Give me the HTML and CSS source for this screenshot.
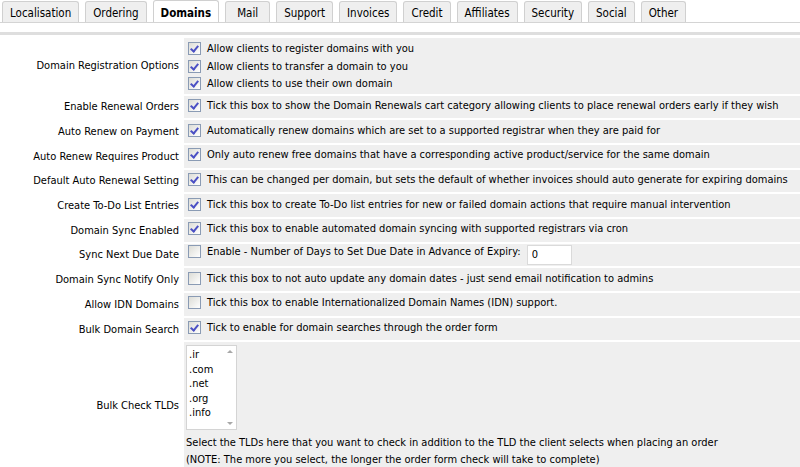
FILE: index.html
```html
<!DOCTYPE html>
<html lang="en">
<head>
    <meta charset="UTF-8">
    <title>General Settings - Domains</title>
    <link rel="stylesheet" href="styles.css">
</head>
<body>
    <ul class="tabs">
        <li>Localisation</li>
        <li>Ordering</li>
        <li class="active">Domains</li>
        <li>Mail</li>
        <li>Support</li>
        <li>Invoices</li>
        <li>Credit</li>
        <li>Affiliates</li>
        <li>Security</li>
        <li>Social</li>
        <li>Other</li>
    </ul>

    <div class="tabbox">
        <table class="form">
            <tr>
                <td class="label">Domain Registration Options</td>
                <td class="field multi">
                    <label><input type="checkbox" checked> Allow clients to register domains with you</label>
                    <label><input type="checkbox" checked> Allow clients to transfer a domain to you</label>
                    <label><input type="checkbox" checked> Allow clients to use their own domain</label>
                </td>
            </tr>
            <tr>
                <td class="label">Enable Renewal Orders</td>
                <td class="field"><label><input type="checkbox" checked> Tick this box to show the Domain Renewals cart category allowing clients to place renewal orders early if they wish</label></td>
            </tr>
            <tr>
                <td class="label">Auto Renew on Payment</td>
                <td class="field"><label><input type="checkbox" checked> Automatically renew domains which are set to a supported registrar when they are paid for</label></td>
            </tr>
            <tr>
                <td class="label">Auto Renew Requires Product</td>
                <td class="field"><label><input type="checkbox" checked> Only auto renew free domains that have a corresponding active product/service for the same domain</label></td>
            </tr>
            <tr>
                <td class="label">Default Auto Renewal Setting</td>
                <td class="field"><label><input type="checkbox" checked> This can be changed per domain, but sets the default of whether invoices should auto generate for expiring domains</label></td>
            </tr>
            <tr>
                <td class="label">Create To-Do List Entries</td>
                <td class="field"><label><input type="checkbox" checked> Tick this box to create To-Do list entries for new or failed domain actions that require manual intervention</label></td>
            </tr>
            <tr>
                <td class="label">Domain Sync Enabled</td>
                <td class="field"><label><input type="checkbox" checked> Tick this box to enable automated domain syncing with supported registrars via cron</label></td>
            </tr>
            <tr>
                <td class="label">Sync Next Due Date</td>
                <td class="field"><label><input type="checkbox"> Enable - Number of Days to Set Due Date in Advance of Expiry:</label> <input type="text" class="days" value="0"></td>
            </tr>
            <tr>
                <td class="label">Domain Sync Notify Only</td>
                <td class="field"><label><input type="checkbox"> Tick this box to not auto update any domain dates - just send email notification to admins</label></td>
            </tr>
            <tr>
                <td class="label">Allow IDN Domains</td>
                <td class="field"><label><input type="checkbox"> Tick this box to enable Internationalized Domain Names (IDN) support.</label></td>
            </tr>
            <tr>
                <td class="label">Bulk Domain Search</td>
                <td class="field"><label><input type="checkbox" checked> Tick to enable for domain searches through the order form</label></td>
            </tr>
            <tr>
                <td class="label">Bulk Check TLDs</td>
                <td class="field tlds">
                    <div class="listbox">
                        <ul>
                            <li>.ir</li>
                            <li>.com</li>
                            <li>.net</li>
                            <li>.org</li>
                            <li>.info</li>
                        </ul>
                        <div class="scroll">
                            <span class="up"></span>
                            <span class="down"></span>
                        </div>
                    </div>
                    <div class="help">Select the TLDs here that you want to check in addition to the TLD the client selects when placing an order<br>(NOTE: The more you select, the longer the order form check will take to complete)</div>
                </td>
            </tr>
        </table>
    </div>
</body>
</html>
```

FILE: styles.css
```css
body {
    margin: 0;
    font-family: "DejaVu Sans Condensed", "DejaVu Sans", sans-serif;
    font-size: 11px;
    color: #000;
    background: #fff;
    overflow: hidden;
}
.tabs {
    list-style: none;
    margin: 0;
    padding: 1px 0 0 2px;
    display: flex;
    gap: 6px;
    border-bottom: 1px solid #d4d4d4;
    height: 21px;
}
.tabs li {
    height: 21px;
    min-width: 45px;
    box-sizing: border-box;
    padding: 4px 7px 0;
    border: 1px solid #d0d0d0;
    border-bottom: none;
    border-radius: 3px 3px 0 0;
    background: #efefef;
    font-size: 11.5px;
    text-align: center;
}
.tabs li.active {
    background: #fff;
    font-weight: bold;
    height: 22px;
    margin-top: -1px;
    padding-top: 5px;
}
.tabbox {
    margin-top: 9px;
    border-top: 3px solid #dedede;
}
.form {
    width: 100%;
    border-collapse: separate;
    border-spacing: 0 2px;
    margin-top: 1px;
}
.form td {
    height: 22.7px;
    padding: 0;
    vertical-align: middle;
}
.label {
    width: 179px;
    text-align: right;
    padding-right: 5px !important;
    white-space: nowrap;
}
.field {
    background: #efefef;
    padding-left: 4px !important;
    white-space: nowrap;
}
.field label {
    display: inline-flex;
    align-items: center;
}
.multi {
    padding: 2px 0 1px 4px !important;
}
.multi label {
    display: flex;
    height: 17.5px;
}
input[type="checkbox"] {
    appearance: none;
    width: 13px;
    height: 13px;
    margin: 0 6px 0 0;
    border: 1px solid #8a9bb4;
    background: linear-gradient(135deg, #dcdcd6 0%, #fff 100%);
    box-sizing: border-box;
    position: relative;
}
input[type="checkbox"]:checked::after {
    content: "";
    position: absolute;
    left: 3px;
    top: 1px;
    width: 3px;
    height: 6px;
    border: solid #4b50c4;
    border-width: 0 2px 2px 0;
    transform: rotate(40deg);
}
.days {
    width: 45px;
    height: 20px;
    box-sizing: border-box;
    margin-left: 3px;
    border: 1px solid #dadada;
    padding: 1px 4px;
    font: inherit;
    vertical-align: middle;
}
.tlds {
    padding: 3px 0 1px 2px !important;
    vertical-align: top;
}
.listbox {
    display: flex;
    width: 51px;
    height: 85px;
    box-sizing: border-box;
    border: 1px solid #d4d4d4;
    background: #fff;
}
.listbox ul {
    list-style: none;
    margin: 0;
    padding: 2px 0 0 2px;
    flex: 1;
    line-height: 14.5px;
}
.scroll {
    width: 12px;
    display: flex;
    flex-direction: column;
    justify-content: space-between;
    align-items: center;
    padding: 4px 0;
}
.scroll span {
    width: 0;
    height: 0;
    border-left: 3px solid transparent;
    border-right: 3px solid transparent;
}
.scroll .up {
    border-bottom: 3px solid #a8a8a8;
}
.scroll .down {
    border-top: 3px solid #a8a8a8;
}
.help {
    margin-top: 4px;
    line-height: 17px;
}
```
